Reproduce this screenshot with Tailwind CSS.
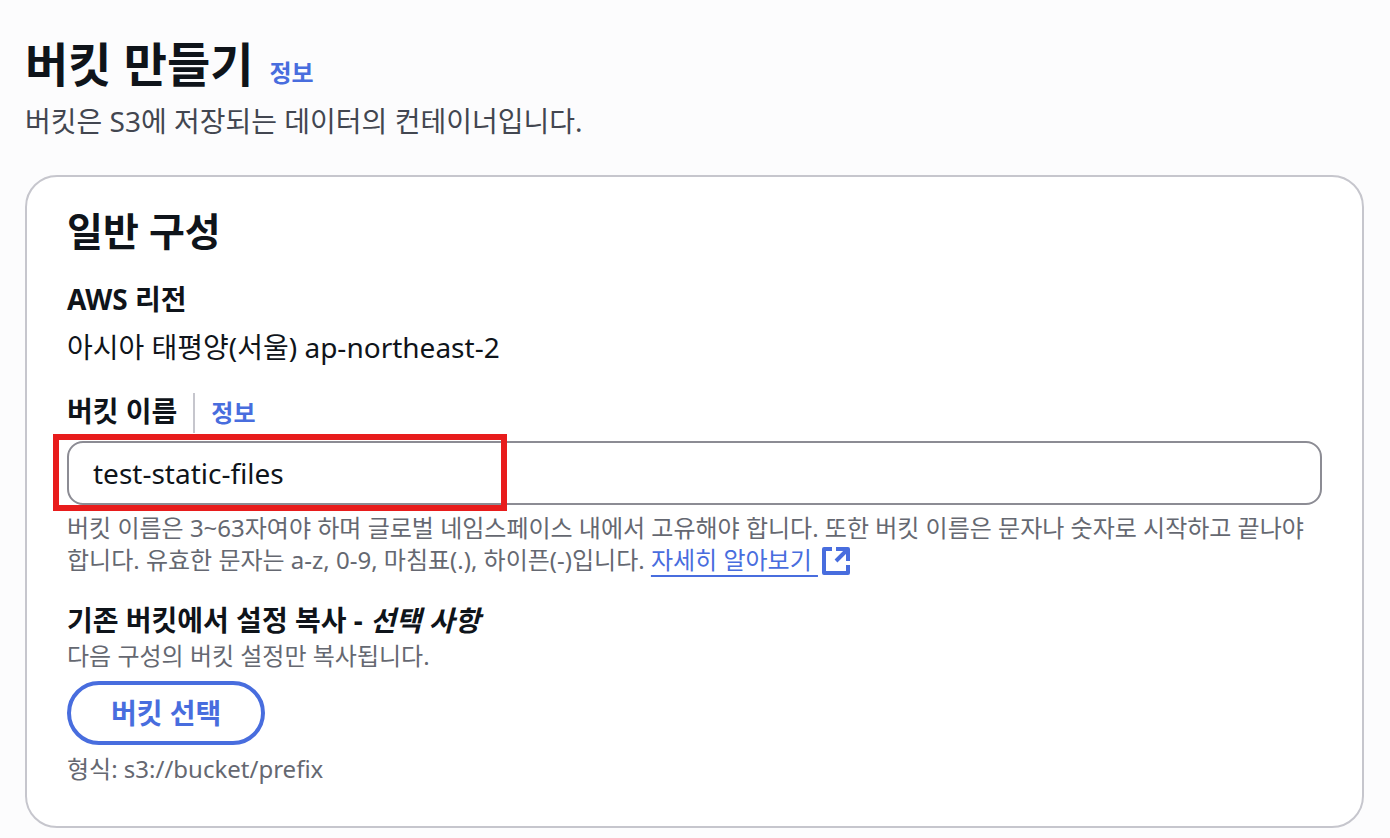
<!DOCTYPE html>
<html lang="ko">
<head>
  <meta charset="UTF-8" />
  <title>버킷 만들기</title>
  <meta name="viewport" content="width=device-width, initial-scale=1" />
  <script src="https://cdn.jsdelivr.net/npm/@tailwindcss/browser@4"></script>
</head>
<body class="bg-[#fcfcfd] text-[#0f141a] font-['Noto_Sans','Noto_Sans_CJK_KR',sans-serif] text-[28px] leading-10 break-keep">
  <main class="pl-[25px] pr-[26px] pt-8 pb-2">
    <!-- 페이지 제목 -->
    <header class="mb-[34px]">
      <div class="flex items-baseline gap-4">
        <h1 class="text-[47px] leading-[64px] font-bold">버킷 만들기</h1>
        <a href="#" class="text-2xl leading-8 font-bold text-[#486dde]">정보</a>
      </div>
      <p class="mt-[5px] text-[#424650]">버킷은 S3에 저장되는 데이터의 컨테이너입니다.</p>
    </header>

    <!-- 일반 구성 -->
    <section class="bg-white border-2 border-[#c6c6cd] rounded-[32px] px-10 pt-[30px] pb-[41px]">
      <h2 class="text-[39px] leading-[48px] font-bold">일반 구성</h2>

      <dl class="mt-6">
        <dt class="font-bold">AWS 리전</dt>
        <dd class="mt-2">아시아 태평양(서울) ap-northeast-2</dd>
      </dl>

      <form>
        <div class="mt-[26px] flex items-start">
          <label for="bucketName" class="font-bold leading-9 pr-4">버킷 이름</label>
          <a href="#" class="border-l-2 border-[#c6c6cd] pl-4 text-2xl leading-10 font-bold text-[#486dde]">정보</a>
        </div>
        <div class="relative mt-2">
          <input
            type="text"
            id="bucketName"
            value="test-static-files"
            class="block w-full h-16 px-6 bg-white border-2 border-[#8c8c94] rounded-2xl"
          />
          <!-- 강조 표시 -->
          <div class="absolute -left-[14px] -top-[7px] w-[454px] h-[77px] border-6 border-[#e81c1c] pointer-events-none"></div>
        </div>
        <p class="mt-[7px] text-2xl leading-8 text-[#656871]">
          버킷 이름은 3~63자여야 하며 글로벌 네임스페이스 내에서 고유해야 합니다. 또한 버킷 이름은 문자나 숫자로 시작하고 끝나야 합니다. 유효한 문자는 a-z, 0-9, 마침표(.), 하이픈(-)입니다.
          <a href="#" class="text-[#486dde] underline decoration-2 underline-offset-6">자세히 알아보기&nbsp;<svg class="ml-1 inline-block size-7 align-[-6px]" viewBox="0 0 28 28" fill="none" stroke="currentColor" stroke-width="4" stroke-linejoin="round" aria-hidden="true">
              <path d="M10 2H2v24h24v-8M14 2h12v12M26 2L14 14" />
            </svg></a>
        </p>

        <h3 class="mt-6 font-bold">기존 버킷에서 설정 복사 - <em>선택 사항</em></h3>
        <p class="text-2xl leading-8 text-[#656871]">다음 구성의 버킷 설정만 복사됩니다.</p>
        <button type="button" class="mt-[9px] block h-16 px-10 border-4 border-[#486dde] rounded-full bg-white font-bold text-[#486dde]">버킷 선택</button>
        <p class="mt-2 text-2xl leading-8 text-[#656871]">형식: s3://bucket/prefix</p>
      </form>
    </section>
  </main>
</body>
</html>
